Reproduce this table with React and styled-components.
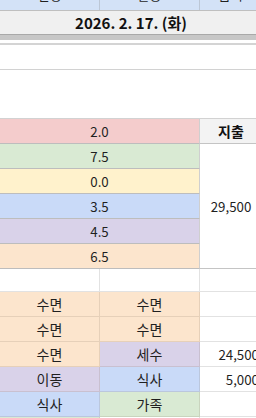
import React from 'react';
import styled, { createGlobalStyle } from 'styled-components';

const GlobalStyle = createGlobalStyle`
  html, body {
    margin: 0;
    padding: 0;
    background: #ffffff;
    overflow: hidden;
  }
  body {
    font-family: "Noto Sans CJK KR", "Noto Sans", sans-serif;
    color: #1f1f1f;
  }
`;

const colors = {
  red: '#f4cccc',
  green: '#d9ead3',
  yellow: '#fff2cc',
  blue: '#c9daf8',
  purple: '#d9d2e9',
  orange: '#fce5cd',
  white: '#ffffff',
  head: '#d3e2f7',
};

const Sheet = styled.div`
  width: 262px;
  font-size: 13.3px;
`;

// only the bottom of the header row is still visible after scrolling
const TopClip = styled.div`
  height: 10px;
  overflow: hidden;
  border-bottom: 1px solid #bfbfbf;
`;

const TopRow = styled.div`
  display: grid;
  grid-template-columns: 100px 100px 62px;
  height: 27px;
  margin-top: -17px;
`;

const TopCell = styled.div`
  background: ${colors.head};
  border-right: 1px solid #bcc7d6;
  text-align: center;
  line-height: 24px;
  font-size: 13px;
`;

const DateRow = styled.div`
  height: 23px;
  background: #f0f0f0;
  border-bottom: 1px solid #a9a9a9;
  text-align: center;
  line-height: 23px;
  font-size: 15px;
  font-weight: 700;
  color: #111;
`;

const FreezeBar = styled.div`
  height: 5px;
  background: #c7c7c7;
  border-bottom: 3px solid #ffffff;
`;

const Divider = styled.div`
  height: 2px;
  background: #d4d4d4;
`;

const Blank = styled.div`
  height: ${p => p.h}px;
  border-bottom: 1px solid #d2d2d2;
`;

const ColorBlock = styled.div`
  display: grid;
  grid-template-columns: 200px 62px;
  grid-auto-rows: 25px;
`;

const Merged = styled.div`
  background: ${p => colors[p.tone]};
  border-bottom: 1px solid #bdbdbd;
  border-right: 1px solid #cfcfcf;
  display: flex;
  align-items: center;
  justify-content: center;
`;

const HeadCell = styled.div`
  background: #f3f3f3;
  border-bottom: 1px solid #c4c4c4;
  display: flex;
  align-items: center;
  justify-content: center;
  font-weight: 700;
  font-size: 14px;
  color: #111;
`;

const SpanCell = styled.div`
  grid-row: span 5;
  border-bottom: 1px solid #c4c4c4;
  display: flex;
  align-items: center;
  justify-content: center;
`;

const Grid = styled.div`
  display: grid;
  grid-template-columns: 100px 100px 62px;
  grid-template-rows: 23px;
  grid-auto-rows: 25px;
`;

const Cell = styled.div`
  background: ${p => colors[p.tone || 'white']};
  border-bottom: 1px solid ${p => (p.tone && p.tone !== 'white' ? 'rgba(120, 100, 80, 0.16)' : '#e2e2e2')};
  border-right: 1px solid ${p => (p.tone && p.tone !== 'white' ? 'rgba(120, 100, 80, 0.16)' : '#e2e2e2')};
  display: flex;
  align-items: center;
  justify-content: center;
  font-size: 14px;
`;

const Amount = styled(Cell)`
  justify-content: flex-end;
  padding-right: 2px;
  font-size: 13.3px;
`;

const blocks = [
  { tone: 'green', value: '7.5' },
  { tone: 'yellow', value: '0.0' },
  { tone: 'blue', value: '3.5' },
  { tone: 'purple', value: '4.5' },
  { tone: 'orange', value: '6.5' },
];

const rows = [
  { a: ['', 'white'], b: ['', 'white'], amount: '' },
  { a: ['수면', 'orange'], b: ['수면', 'orange'], amount: '' },
  { a: ['수면', 'orange'], b: ['수면', 'orange'], amount: '' },
  { a: ['수면', 'orange'], b: ['세수', 'purple'], amount: '24,500' },
  { a: ['이동', 'purple'], b: ['식사', 'blue'], amount: '5,000' },
  { a: ['식사', 'blue'], b: ['가족', 'green'], amount: '' },
  { a: ['가족', 'green'], b: ['', 'white'], amount: '' },
];

export default function App() {
  return (
    <>
      <GlobalStyle />
      <Sheet>
        <TopClip>
          <TopRow>
            <TopCell>일정</TopCell>
            <TopCell>활동</TopCell>
            <TopCell>금액</TopCell>
          </TopRow>
        </TopClip>
        <DateRow>2026. 2. 17. (화)</DateRow>
        <FreezeBar />
        <Divider />
        <Blank h={24} />
        <Blank h={48} />
        <ColorBlock>
          <Merged tone="red">2.0</Merged>
          <HeadCell>지출</HeadCell>
          {blocks.map((b, i) => (
            <React.Fragment key={b.tone}>
              <Merged tone={b.tone}>{b.value}</Merged>
              {i === 0 && <SpanCell>29,500</SpanCell>}
            </React.Fragment>
          ))}
        </ColorBlock>
        <Grid>
          {rows.map((r, i) => (
            <React.Fragment key={i}>
              <Cell tone={r.a[1]}>{r.a[0]}</Cell>
              <Cell tone={r.b[1]}>{r.b[0]}</Cell>
              <Amount>{r.amount}</Amount>
            </React.Fragment>
          ))}
        </Grid>
      </Sheet>
    </>
  );
}
